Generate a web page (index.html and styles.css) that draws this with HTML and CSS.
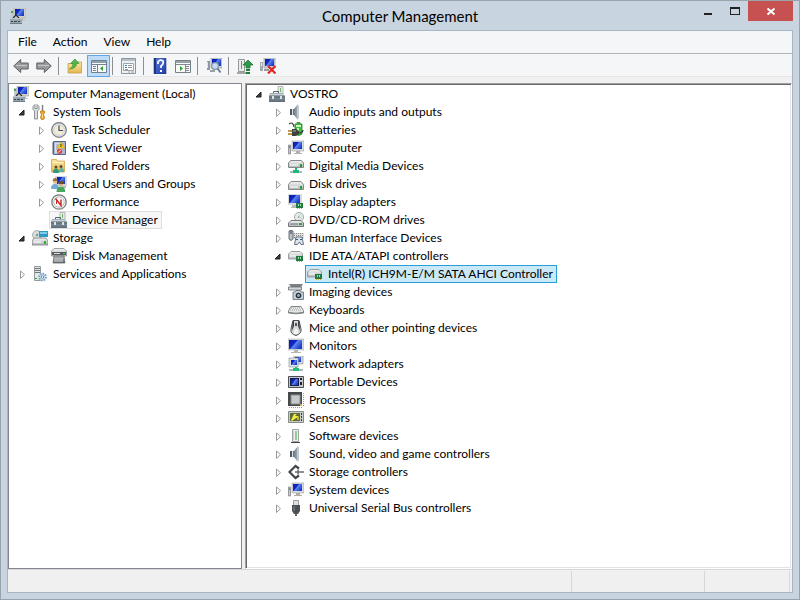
FILE: index.html
```html
<!DOCTYPE html>
<html lang="en">
<head>
<meta charset="utf-8">
<title>Computer Management</title>
<link rel="stylesheet" href="styles.css">
</head>
<body>
<svg class="sprite" aria-hidden="true">
  <defs>
    <linearGradient id="g-screen" x1="0" y1="0" x2="1" y2="0.6"><stop offset="0" stop-color="#0a1cae"/><stop offset="0.45" stop-color="#1226c4"/><stop offset="0.55" stop-color="#5f86ee"/><stop offset="1" stop-color="#1a3ccc"/></linearGradient>
    <linearGradient id="g-metal" x1="0" y1="0" x2="0" y2="1"><stop offset="0" stop-color="#f4f4f4"/><stop offset="1" stop-color="#b2b6b8"/></linearGradient>
    <linearGradient id="g-dark" x1="0" y1="0" x2="0" y2="1"><stop offset="0" stop-color="#b4b8ba"/><stop offset="1" stop-color="#5c6164"/></linearGradient>
    <linearGradient id="g-box" x1="0" y1="0" x2="0" y2="1"><stop offset="0" stop-color="#a3afb8"/><stop offset="1" stop-color="#5d6c78"/></linearGradient>
    <linearGradient id="g-folder" x1="0" y1="0" x2="0" y2="1"><stop offset="0" stop-color="#fbe7a0"/><stop offset="1" stop-color="#e3b753"/></linearGradient>
    <linearGradient id="g-horn" x1="0" y1="0" x2="1" y2="0"><stop offset="0" stop-color="#59636c"/><stop offset="1" stop-color="#a9b3ba"/></linearGradient>
    <linearGradient id="g-help" x1="0" y1="0" x2="1" y2="1"><stop offset="0" stop-color="#5b7fe0"/><stop offset="1" stop-color="#1d3ca6"/></linearGradient>
  </defs>
  <symbol id="i-closed" viewBox="0 0 9 9"><path d="M3.500 1 7.500 4.700 3.500 8.500Z" fill="#fff" stroke="#9a9a9a"/></symbol>
  <symbol id="i-open" viewBox="0 0 9 9"><path d="M7 2v5H2Z" fill="#404040" stroke="#1c1c1c"/></symbol>
  <symbol id="i-mgmt" viewBox="0 0 16 16">
    <path d="M1 2h3v9H1Z" fill="#c8ccce"/><path d="M1 3h2v2H1Z" fill="#3aa648"/>
    <path d="M4 0h12v10H4Z" fill="#d5d3c8" stroke="#a9a79b" stroke-width=".6"/><path d="M5 1h9v7H5Z" fill="url(#g-screen)"/><path d="M9 10h4v2h2v1H9Z" fill="#c3c1b4"/>
    <path d="M3 10 6 7l3 3" fill="none" stroke="#222b33" stroke-width="1.200"/><path d="M0 10h12v5H0Z" fill="#9aa8b1"/><path d="M0 10h12v1H0Z" fill="#c0cad0"/><path d="M1 13h2v1H1ZM4 13h3v1H4ZM8 13h2v1H8Z" fill="#35404a"/><path d="M0 15h12v1H0Z" fill="#6f7c85"/>
  </symbol>
  <symbol id="i-tools" viewBox="0 0 16 16">
    <path d="M3 .5v4h2v-4l2 2v3L5.500 7v8h-3V7L1 5.500v-3Z" fill="#dcdede" stroke="#777c80" stroke-width=".8"/>
    <path d="M10.500 1v7" stroke="#7d8387" stroke-width="1.500"/><path d="M8.500 7h4v2l-1 1 1 4-1 1.500H9.500l-1-1.500 1-4-1-1Z" fill="#f0a81c" stroke="#b77409" stroke-width=".7"/><path d="M10.500 10v4" stroke="#ffe08a"/>
  </symbol>
  <symbol id="i-clock" viewBox="0 0 16 16"><circle cx="8" cy="8" r="7.300" fill="#e4e9ee" stroke="#777a7c" stroke-width="1.200"/><circle cx="8" cy="8" r="5.300" fill="#f5ecd6" stroke="#c6cacd" stroke-width=".8"/><path d="M8 3.500v5h4" fill="none" stroke="#3e5266" stroke-width="1.200"/></symbol>
  <symbol id="i-event" viewBox="0 0 16 16"><path d="M2.500 1.500h12v13h-12Z" fill="#a9b7d8" stroke="#56678c"/><path d="M4 3h6v10H4Z" fill="#d8e0ee"/><path d="M5 5h4M5 7h4M5 9h3" stroke="#7c8cac" stroke-width=".8"/><path d="m10 2 4 6H6Z" fill="#f9d322" stroke="#c39a10" stroke-width=".6"/><path d="M10 4v3" stroke="#333"/><circle cx="8.500" cy="11.300" r="2.600" fill="#e14636"/><path d="m7.300 12.500 2.400-2.400" stroke="#fff"/><path d="M1 3h2M1 5h2M1 7h2M1 9h2M1 11h2M1 13h2" stroke="#565c68"/></symbol>
  <symbol id="i-shared" viewBox="0 0 16 16"><path d="M.5 3V1.500h5l1 1.500h7v11H.5Z" fill="url(#g-folder)" stroke="#d0a64a" stroke-width=".8"/><path d="M2 4h10v1H2Z" fill="#fff6cc"/><circle cx="5" cy="9" r="1.500" fill="#5e4a31"/><circle cx="10" cy="8.500" r="1.500" fill="#5e4a31"/><path d="M2 15q0-4.500 3-4.500T8 15Z" fill="#2d9a7e"/><path d="M8 14q0-4 2.500-4t2.500 4Z" fill="#62b0a0"/></symbol>
  <symbol id="i-users" viewBox="0 0 16 16"><path d="M4 0h12v10H4Z" fill="#d6d9dc"/><path d="M6 1h8v7H6Z" fill="url(#g-screen)"/><path d="M12 10h3v2h-3Z" fill="#b9bcb8"/><circle cx="4" cy="5.500" r="2.300" fill="#e3bd88"/><path d="M1.700 5q0-3 2.500-3t2.300 3Z" fill="#9a7232"/><path d="M0 13q0-5 4-5t4 5Z" fill="#77a8d4"/><circle cx="10" cy="8" r="2.300" fill="#d9b08a"/><path d="M7.500 8q0-3.300 2.600-3.300t2.400 3.300Z" fill="#6d4f2c"/><path d="M5.500 16q0-5.500 4.500-5.500t4 5.500Z" fill="#4aa55f"/></symbol>
  <symbol id="i-perf" viewBox="0 0 16 16"><circle cx="8" cy="8" r="7.200" fill="#f7f7f7" stroke="#77797a" stroke-width="1.300"/><circle cx="8" cy="8" r="5.200" fill="#fff" stroke="#a4a4a4" stroke-width=".8"/><path d="m4.500 4.500 5.500 7V5.500" fill="none" stroke="#cc2a24" stroke-width="1.500"/><path d="M5.500 6v4" stroke="#cc2a24"/></symbol>
  <symbol id="i-device" viewBox="0 0 16 16"><path d="M9 .5h5v7H9Z" fill="#e8ebe9" stroke="#a5aaa8" stroke-width=".8"/><path d="M11 2h1v4h-1Z" fill="#6cb563"/><path d="M4.500 7V5.500h5V7" fill="none" stroke="#52606b"/><path d="M1 7h13l2 3v6H0v-6Z" fill="url(#g-box)"/><path d="M1 8.500h14" stroke="#ccd4da"/><path d="M0 11h16" stroke="#4e5e6a"/><path d="M3 10h2v3H3ZM11 10h2v3h-2Z" fill="#dde2e6"/></symbol>
  <symbol id="i-storage" viewBox="0 0 16 16"><ellipse cx="5" cy="5" rx="4.500" ry="4.500" fill="#d9dddd" stroke="#999d9e" stroke-width=".8"/><circle cx="5" cy="5" r="1.300" fill="#73a787"/><path d="M7 1h9v6H7Z" fill="#2c99c6"/><path d="M8 2h7v2H8Z" fill="#7dcdea"/><path d="M2 8h12l2 3v4H0v-4Z" fill="url(#g-metal)" stroke="#777c7f" stroke-width=".8"/><path d="M12 11h2v3h-2Z" fill="#22b522"/><path d="M2 12h7" stroke="#fff"/></symbol>
  <symbol id="i-diskmgmt" viewBox="0 0 16 16"><path d="M3 .5h10L15.500 3v5H.5V3Z" fill="url(#g-metal)" stroke="#8a8e90" stroke-width=".8"/><path d="M1 4h14v3H1Z" fill="#555b5f"/><path d="M3 5.500h6" stroke="#ddd"/><path d="M12 5h2v1h-2Z" fill="#3fce46"/><path d="M3 8h10l1 7H2Z" fill="url(#g-dark)" stroke="#666b6e" stroke-width=".8"/><path d="M3 11h9M3 13h9" stroke="#d5d8da"/></symbol>
  <symbol id="i-services" viewBox="0 0 16 16"><path d="M2.500.5h6v14h-6Z" fill="#e4e8e9" stroke="#949a9c"/><path d="M3 2.500h5M3 4.500h5M3 6.500h5" stroke="#6d767b"/><path d="M3 12h2v1H3Z" fill="#2b9c2b"/><circle cx="10.500" cy="11" r="3.400" fill="#cfe0ee" stroke="#7fa5c6" stroke-width="2" stroke-dasharray="1.600 1"/><circle cx="10.500" cy="11" r="1.300" fill="#fff" stroke="#6790b2"/></symbol>
  <symbol id="i-sound" viewBox="0 0 16 16"><path d="M4 5h2l4-5v16l-4-5H4Z" fill="url(#g-horn)"/><path d="M9 1h2v14H9Z" fill="#b9cbd6"/><path d="M2 5h2v6H2Z" fill="#4d5760"/><path d="M4.500 5v6" stroke="#dde2e6"/></symbol>
  <symbol id="i-battery" viewBox="0 0 16 16"><path d="M1 2q4-3 5 3" fill="none" stroke="#3c3c34" stroke-width="1.200"/><path d="M7 2h2V.5h3V2h2v10q-3 3-7 0Z" fill="#40bd3e" stroke="#267d2b" stroke-width=".8"/><path d="M8 3h5v2H8Z" fill="#c9f3c2"/><path d="M10 6v4" stroke="#c3f6bb" stroke-width="2"/><path d="M0 9h5M0 12h5" stroke="#a07811" stroke-width="1.500"/><path d="M4 7h4l3 2v3l-3 2H4Z" fill="#42423d"/><path d="M5 9h3" stroke="#aaa"/><path d="M10 11q5 0 5-3" fill="none" stroke="#333" stroke-width="1.200"/></symbol>
  <symbol id="i-computer" viewBox="0 0 16 16"><path d="M.5 5h2v9h-2Z" fill="#c3c9ca" stroke="#85898b" stroke-width=".8"/><path d="M1 6h1v2H1Z" fill="#3b4"/><path d="M4 1h12v10H4Z" fill="#d9dcde" stroke="#a7aaac" stroke-width=".7"/><path d="M5 2h9v7H5Z" fill="url(#g-screen)"/><path d="M8 11h4v2h2v1H6v-1h2Z" fill="#b2afa5"/></symbol>
  <symbol id="i-media" viewBox="0 0 16 16"><path d="M2.500 2.500h11L15.500 5v4.500H.5V5Z" fill="url(#g-metal)" stroke="#85898b"/><path d="M2 7h8" stroke="#fff"/><path d="M12 6h2v3h-2Z" fill="#249b33"/><path d="M2 14h12" stroke="#8fa39b" stroke-width="1.500"/><path d="M7 10h2v2h2v3H5v-3h2Z" fill="#1fb878"/></symbol>
  <symbol id="i-disk" viewBox="0 0 16 16"><path d="M3 5.500h10l2.500 3v5H.5v-5Z" fill="url(#g-metal)" stroke="#85898b"/><path d="M2 11h8" stroke="#fff"/><path d="M12 10h2v3h-2Z" fill="#24a433"/></symbol>
  <symbol id="i-card" viewBox="0 0 8 8"><path d="M1 1h7v5H1Z" fill="#217a43"/><path d="M2 6h1v1H2ZM4 6h1v1H4ZM6 6h1v1H6Z" fill="#cda83a"/><path d="M3 2h1v2H3ZM5 2h1v2H5Z" fill="#9fe1a9"/></symbol>
  <symbol id="i-display" viewBox="0 0 16 16"><path d="M0 0h14v11H0Z" fill="#d7dadd"/><path d="M1 1h11v8H1Z" fill="url(#g-screen)"/><path d="M4 11h5v2h-1v1H3v-1h1Z" fill="#bbb"/><use href="#i-card" x="7" y="8" width="8" height="8"/></symbol>
  <symbol id="i-dvd" viewBox="0 0 16 16"><circle cx="11" cy="5" r="4.600" fill="#e6e8e8" stroke="#979b9d" stroke-width=".8"/><circle cx="11" cy="5" r="1.200" fill="#a3a7a9"/><path d="m11 5 2-4M11 5l4 2" stroke="#bce4cf"/><path d="M3 8.500h10l2.500 2.500v3.500H.5V11Z" fill="url(#g-metal)" stroke="#707578"/><path d="M2 12h8" stroke="#6d7275"/><path d="M11 11h3v2h-3Z" fill="#28a83b"/></symbol>
  <symbol id="i-hid" viewBox="0 0 16 16"><path d="M5 3h11v6H5Z" fill="#dfe1e2"/><path d="M6 3.500h10M6 5.500h10M6 7.500h10" stroke="#888" stroke-dasharray="1 1"/><path d="M1 1q2-1.500 4 0v8q-2 3-4 0Z" fill="#bcc3c9" stroke="#49535b" stroke-width=".8"/><path d="M3 1v3" stroke="#333f49"/><path d="M8 7h6l1.500 7.500H13L11.500 12 9.500 14.500H6.500Z" fill="#dce4eb" stroke="#58687a" stroke-width=".9"/><path d="M8 9.500h2M12 9.500h2" stroke="#3b5f83"/></symbol>
  <symbol id="i-ide" viewBox="0 0 16 16"><path d="M3 3.500h9L14.500 6v5H.5V6Z" fill="url(#g-metal)" stroke="#9a9ea0"/><path d="M2 8h6" stroke="#fff"/><use href="#i-card" x="7" y="7" width="8" height="8"/></symbol>
  <symbol id="i-imaging" viewBox="0 0 16 16"><path d="m1 0 14 0-2 3H3Z" fill="#7b8285"/><path d="M.5 3h13v3H.5Z" fill="#d5d9db" stroke="#666c70" stroke-width=".8"/><path d="M5 8h2l1-1.500h4L13 8h2.500v7.500H5Z" fill="#c7cdd2" stroke="#626b72" stroke-width=".8"/><circle cx="10.500" cy="11.500" r="2.800" fill="#27313c"/><circle cx="10.500" cy="11.500" r="1.400" fill="#8db9dc"/></symbol>
  <symbol id="i-keyboard" viewBox="0 0 16 16"><path d="M3 4.500h10l2.500 4V11q-7.500 1.500-15 0V8.500Z" fill="#e4e6e6" stroke="#777b7d" stroke-width=".9"/><path d="M3 6h10M2 8h12" stroke="#a4a8aa" stroke-dasharray="1 1"/><path d="M1 10.500q7 1.500 14 0" fill="none" stroke="#7b7f81"/></symbol>
  <symbol id="i-mouse" viewBox="0 0 16 16"><path d="M5 .5h6q1 4 2 8.500t-5 6.500Q2 14 3 9T5 .5Z" fill="#d6d8d9" stroke="#4b4f51"/><path d="M4.500 1H6v5l-2 5ZM10 1h1.500L12 11l-2-5Z" fill="#3c4042"/><path d="M7 3h2v3H7Z" fill="#51565a"/><path d="M6 11q2-5 4 0v3H6Z" fill="#f3f3f3"/></symbol>
  <symbol id="i-monitor" viewBox="0 0 16 16"><path d="M0 1h16v11H0Z" fill="#d5d9dc" stroke="#aeb2b4" stroke-width=".6"/><path d="M1 2h13v9H1Z" fill="url(#g-screen)"/><path d="M6 12h4v2h3v1H3v-1h3Z" fill="#b6b5ae"/></symbol>
  <symbol id="i-network" viewBox="0 0 16 16"><path d="M6 0h9v8H6Z" fill="#d3d8dc" stroke="#93999e" stroke-width=".7"/><path d="M7 1h6v5H7Z" fill="url(#g-screen)"/><path d="M1 2h9v9H1Z" fill="#dfe3e6" stroke="#93999e" stroke-width=".7"/><path d="M3 4h6v5H3Z" fill="url(#g-screen)"/><path d="M1 14h14" stroke="#8fa39b" stroke-width="1.500"/><path d="M7 11h2v1h2v3H5v-3h2Z" fill="#24be7c"/></symbol>
  <symbol id="i-portable" viewBox="0 0 16 16"><path d="M.5 2.500h15v11H.5Z" fill="#c3c7c9" stroke="#4c5052"/><path d="M2 4h9v8H2Z" fill="#101c4c"/><path d="M3 5h7v6H3Z" fill="url(#g-screen)"/><path d="M12 4h2v2h-2ZM12 8h2v3h-2Z" fill="#222"/></symbol>
  <symbol id="i-processor" viewBox="0 0 16 16"><path d="M15.500 1v14M1 15.500h14" stroke="#c99924" stroke-dasharray="1 1"/><path d="M0 0h14v14H0Z" fill="#45494b"/><path d="M3 3h9v9H3Z" fill="#c6caca" stroke="#8a8e90"/><path d="M12 12h2v2h-2Z" fill="#e7b442"/></symbol>
  <symbol id="i-sensor" viewBox="0 0 16 16"><path d="M.5 1.500h15v11H.5Z" fill="#c9cdca" stroke="#858b88"/><path d="M2 3h10v8H2Z" fill="#5d683b"/><path d="m3 10 3-6h3L7 6h4l-7 5Z" fill="#f2ec3c"/><path d="M9 7h2v3H9Z" fill="#b1bd38"/><path d="M13 3h1v2h-1ZM13 6h1v2h-1ZM13 9h1v2h-1Z" fill="#343a37"/></symbol>
  <symbol id="i-software" viewBox="0 0 16 16"><path d="M4.500 1.500h6v12h-6Z" fill="#edf0ee" stroke="#a0a4a2"/><path d="M8 3v9" stroke="#55b45b" stroke-width="1.200"/><path d="M5 3h1v9H5Z" fill="#cbd0cd"/><path d="M3 14.500h9" stroke="#414543"/></symbol>
  <symbol id="i-storectl" viewBox="0 0 16 16"><path d="M11 4.500 7.500 2 1.500 8l6 6 3.500-2.500" fill="none" stroke="#44484a" stroke-width="2.200"/><path d="M7 8h9M10 5.500v5" stroke="#696e71" stroke-width="1.600"/></symbol>
  <symbol id="i-usb" viewBox="0 0 16 16"><path d="M5.500.5h5V6h-5Z" fill="#dfe1e2" stroke="#85898b" stroke-width=".8"/><path d="M4 5h8v6l-2 3H6l-2-3Z" fill="#4c5053"/><path d="M6 6v5" stroke="#878c8f"/><path d="M8 13v3" stroke="#5e6366" stroke-width="2"/></symbol>
  <symbol id="i-back" viewBox="0 0 16 16"><path d="m.7 8 7-6.500V5h7.500v6H7.700v3.500Z" fill="#979b9e" stroke="#5e6265"/><path d="M3 7.500h11" stroke="#c4c8ca"/></symbol>
  <symbol id="i-fwd" viewBox="0 0 16 16"><path d="m15.300 8-7-6.500V5H.8v6h7.500v3.500Z" fill="#979b9e" stroke="#5e6265"/><path d="M2 7.500h11" stroke="#c4c8ca"/></symbol>
  <symbol id="i-up" viewBox="0 0 16 16"><path d="M1 5.500h6L8 4h6.500v11H1Z" fill="url(#g-folder)" stroke="#c9a04a" stroke-width=".8"/><path d="M2.500 11Q6 10 6 5.500H3.500L8 1l4 4.500H9.500q0 5-7 5.500Z" fill="#4fb94a" stroke="#2d8a33" stroke-width=".6"/></symbol>
  <symbol id="i-treepane" viewBox="0 0 16 16"><path d="M.5 2.500h15v12H.5Z" fill="#f7f9fb" stroke="#71808e"/><path d="M1 3h14v2H1Z" fill="#91a0ad"/><path d="M1 6.500h14" stroke="#74818e"/><path d="M6.500 7v7" stroke="#74818e"/><path d="M2 8.500h3M2 10.500h3M2 12.500h3" stroke="#7b8894"/><path d="M12 8v5L9 10.500Z" fill="#2d9e2f"/></symbol>
  <symbol id="i-props" viewBox="0 0 16 16"><path d="M.5.500h14v15H.5Z" fill="#eef0f2" stroke="#8c969e"/><path d="M1 2h13" stroke="#b8c0c5" stroke-width="2"/><path d="M2.500 5.500h10v7h-10Z" fill="#fff" stroke="#9aa7b0"/><path d="M4 7.500h2M4 9.500h2" stroke="#357cbe"/><path d="M7 7.500h4M7 9.500h4M4 11.500h3" stroke="#889299"/><path d="M7 14h2M10 14h3" stroke="#9aa3a9"/></symbol>
  <symbol id="i-help" viewBox="0 0 16 16"><path d="M2 0h12v16H2Z" fill="url(#g-help)" stroke="#223a85" stroke-width=".6"/><path d="M3 0v16" stroke="#1d357e" stroke-width="2"/><path d="M6 6V4q2-3 5-1 1 3-2 5v2" fill="none" stroke="#fff" stroke-width="1.700"/><path d="M8 12h2v2H8Z" fill="#fff"/></symbol>
  <symbol id="i-actionpane" viewBox="0 0 16 16"><path d="M.5 2.500h15v12H.5Z" fill="#f7f9fb" stroke="#778087"/><path d="M1 3h14v2H1Z" fill="#98a1a8"/><path d="M1 6.500h14M10.500 7v7" stroke="#81898f"/><path d="M11 8.500h3M11 10.500h3M11 12.500h3" stroke="#7f898f"/><path d="m5 8 3 2.500L5 13Z" fill="#2d9e2f"/></symbol>
  <symbol id="i-scan" viewBox="0 0 16 16"><path d="M1 3h3v9H1Z" fill="#8f999f"/><path d="M1 4h1v6H1Z" fill="#e1e5e7"/><path d="M5 0h11v10H5Z" fill="#d1d5d8" stroke="#999ea1" stroke-width=".7"/><path d="M6 1h9v7H6Z" fill="url(#g-screen)"/><path d="M4 12h5v2H4Z" fill="#9ba0a2"/><circle cx="9" cy="8" r="3.400" fill="#c7dbf0" stroke="#7f93a8" stroke-width="1.200"/><path d="m11.500 10.500 3 4" stroke="#697a89" stroke-width="1.800"/></symbol>
  <symbol id="i-update" viewBox="0 0 16 16"><path d="M1.500 1.500h6v12h-6Z" fill="#e9eeea" stroke="#929894"/><path d="M4.500 3v8" stroke="#48a650"/><path d="M0 15h9" stroke="#555"/><path d="m11 2 5 5h-3v3H9V7H6Z" fill="#299c46" stroke="#12682b" stroke-width=".7"/><path d="M9 12h4M9 15h4" stroke="#217c3a" stroke-width="2"/></symbol>
  <symbol id="i-uninstall" viewBox="0 0 16 16"><path d="M0 4h3v9H0Z" fill="#a3aaae"/><path d="M1 5h1v3H1Z" fill="#eee"/><path d="M4 0h11v10H4Z" fill="#d1d5d8" stroke="#999ea1" stroke-width=".7"/><path d="M5 1h9v7H5Z" fill="url(#g-screen)"/><path d="M4 11h5v2H4Z" fill="#999"/><path d="m8 8 7.500 7.500m0-7.500L8 15.500" stroke="#df2824" stroke-width="2.200"/></symbol>
</svg>

<div class="window">
  <header class="titlebar">
    <svg class="icon"><use href="#i-mgmt"/></svg>
    <h1 class="title">Computer Management</h1>
    <div class="controls">
      <button class="control" type="button" aria-label="Minimize"><svg class="glyph" viewBox="0 0 10 10"><path d="M1 7h8v2H1Z" fill="#222"/></svg></button>
      <button class="control" type="button" aria-label="Maximize"><svg class="glyph" viewBox="0 0 10 10"><path d="M0 1h10v8H0ZM1 3v5h8V3Z" fill="#222" fill-rule="evenodd"/></svg></button>
      <button class="control control-close" type="button" aria-label="Close"><svg class="glyph" viewBox="0 0 10 10"><path d="m1.500 2.500 7 6m0-6-7 6" stroke="#fff" stroke-width="2"/></svg></button>
    </div>
  </header>

  <div class="client">
    <nav class="menu" aria-label="Menu">
      <button class="menu-item" type="button">File</button>
      <button class="menu-item" type="button">Action</button>
      <button class="menu-item" type="button">View</button>
      <button class="menu-item" type="button">Help</button>
    </nav>

    <div class="toolbar" role="toolbar" aria-label="Tools">
      <button class="tool" type="button" aria-label="Back"><svg class="icon"><use href="#i-back"/></svg></button>
      <button class="tool" type="button" aria-label="Forward"><svg class="icon"><use href="#i-fwd"/></svg></button>
      <span class="separator"></span>
      <button class="tool" type="button" aria-label="Up one level"><svg class="icon"><use href="#i-up"/></svg></button>
      <button class="tool tool-pressed" type="button" aria-pressed="true" aria-label="Console tree"><svg class="icon"><use href="#i-treepane"/></svg></button>
      <span class="separator"></span>
      <button class="tool" type="button" aria-label="Properties"><svg class="icon"><use href="#i-props"/></svg></button>
      <span class="separator"></span>
      <button class="tool" type="button" aria-label="Help topics"><svg class="icon"><use href="#i-help"/></svg></button>
      <button class="tool" type="button" aria-label="Action pane"><svg class="icon"><use href="#i-actionpane"/></svg></button>
      <span class="separator"></span>
      <button class="tool" type="button" aria-label="Scan for hardware changes"><svg class="icon"><use href="#i-scan"/></svg></button>
      <span class="separator"></span>
      <button class="tool" type="button" aria-label="Update driver"><svg class="icon"><use href="#i-update"/></svg></button>
      <button class="tool" type="button" aria-label="Uninstall"><svg class="icon"><use href="#i-uninstall"/></svg></button>
    </div>

    <main class="panes">
      <section class="pane pane-console" aria-label="Console tree">
        <ul class="tree">
          <li>
            <div class="row"><span class="item"><svg class="icon"><use href="#i-mgmt"/></svg>Computer Management (Local)</span></div>
            <ul class="branch branch-root">
              <li>
                <div class="row"><button class="twisty" type="button" aria-label="Collapse"><svg class="arrow"><use href="#i-open"/></svg></button><span class="item"><svg class="icon"><use href="#i-tools"/></svg>System Tools</span></div>
                <ul class="branch">
                  <li class="row"><button class="twisty" type="button" aria-label="Expand"><svg class="arrow"><use href="#i-closed"/></svg></button><span class="item"><svg class="icon"><use href="#i-clock"/></svg>Task Scheduler</span></li>
                  <li class="row"><button class="twisty" type="button" aria-label="Expand"><svg class="arrow"><use href="#i-closed"/></svg></button><span class="item"><svg class="icon"><use href="#i-event"/></svg>Event Viewer</span></li>
                  <li class="row"><button class="twisty" type="button" aria-label="Expand"><svg class="arrow"><use href="#i-closed"/></svg></button><span class="item"><svg class="icon"><use href="#i-shared"/></svg>Shared Folders</span></li>
                  <li class="row"><button class="twisty" type="button" aria-label="Expand"><svg class="arrow"><use href="#i-closed"/></svg></button><span class="item"><svg class="icon"><use href="#i-users"/></svg>Local Users and Groups</span></li>
                  <li class="row"><button class="twisty" type="button" aria-label="Expand"><svg class="arrow"><use href="#i-closed"/></svg></button><span class="item"><svg class="icon"><use href="#i-perf"/></svg>Performance</span></li>
                  <li class="row"><span class="twisty"></span><span class="item item-current"><svg class="icon"><use href="#i-device"/></svg>Device Manager</span></li>
                </ul>
              </li>
              <li>
                <div class="row"><button class="twisty" type="button" aria-label="Collapse"><svg class="arrow"><use href="#i-open"/></svg></button><span class="item"><svg class="icon"><use href="#i-storage"/></svg>Storage</span></div>
                <ul class="branch">
                  <li class="row"><span class="twisty"></span><span class="item"><svg class="icon"><use href="#i-diskmgmt"/></svg>Disk Management</span></li>
                </ul>
              </li>
              <li class="row"><button class="twisty" type="button" aria-label="Expand"><svg class="arrow"><use href="#i-closed"/></svg></button><span class="item"><svg class="icon"><use href="#i-services"/></svg>Services and Applications</span></li>
            </ul>
          </li>
        </ul>
      </section>

      <section class="pane pane-devices" aria-label="Devices">
        <ul class="tree">
          <li>
            <div class="row"><button class="twisty" type="button" aria-label="Collapse"><svg class="arrow"><use href="#i-open"/></svg></button><span class="item"><svg class="icon"><use href="#i-device"/></svg>VOSTRO</span></div>
            <ul class="branch">
              <li class="row"><button class="twisty" type="button" aria-label="Expand"><svg class="arrow"><use href="#i-closed"/></svg></button><span class="item"><svg class="icon"><use href="#i-sound"/></svg>Audio inputs and outputs</span></li>
              <li class="row"><button class="twisty" type="button" aria-label="Expand"><svg class="arrow"><use href="#i-closed"/></svg></button><span class="item"><svg class="icon"><use href="#i-battery"/></svg>Batteries</span></li>
              <li class="row"><button class="twisty" type="button" aria-label="Expand"><svg class="arrow"><use href="#i-closed"/></svg></button><span class="item"><svg class="icon"><use href="#i-computer"/></svg>Computer</span></li>
              <li class="row"><button class="twisty" type="button" aria-label="Expand"><svg class="arrow"><use href="#i-closed"/></svg></button><span class="item"><svg class="icon"><use href="#i-media"/></svg>Digital Media Devices</span></li>
              <li class="row"><button class="twisty" type="button" aria-label="Expand"><svg class="arrow"><use href="#i-closed"/></svg></button><span class="item"><svg class="icon"><use href="#i-disk"/></svg>Disk drives</span></li>
              <li class="row"><button class="twisty" type="button" aria-label="Expand"><svg class="arrow"><use href="#i-closed"/></svg></button><span class="item"><svg class="icon"><use href="#i-display"/></svg>Display adapters</span></li>
              <li class="row"><button class="twisty" type="button" aria-label="Expand"><svg class="arrow"><use href="#i-closed"/></svg></button><span class="item"><svg class="icon"><use href="#i-dvd"/></svg>DVD/CD-ROM drives</span></li>
              <li class="row"><button class="twisty" type="button" aria-label="Expand"><svg class="arrow"><use href="#i-closed"/></svg></button><span class="item"><svg class="icon"><use href="#i-hid"/></svg>Human Interface Devices</span></li>
              <li>
                <div class="row"><button class="twisty" type="button" aria-label="Collapse"><svg class="arrow"><use href="#i-open"/></svg></button><span class="item"><svg class="icon"><use href="#i-ide"/></svg>IDE ATA/ATAPI controllers</span></div>
                <ul class="branch">
                  <li class="row"><span class="twisty"></span><span class="item item-selected"><svg class="icon"><use href="#i-ide"/></svg>Intel(R) ICH9M-E/M SATA AHCI Controller</span></li>
                </ul>
              </li>
              <li class="row"><button class="twisty" type="button" aria-label="Expand"><svg class="arrow"><use href="#i-closed"/></svg></button><span class="item"><svg class="icon"><use href="#i-imaging"/></svg>Imaging devices</span></li>
              <li class="row"><button class="twisty" type="button" aria-label="Expand"><svg class="arrow"><use href="#i-closed"/></svg></button><span class="item"><svg class="icon"><use href="#i-keyboard"/></svg>Keyboards</span></li>
              <li class="row"><button class="twisty" type="button" aria-label="Expand"><svg class="arrow"><use href="#i-closed"/></svg></button><span class="item"><svg class="icon"><use href="#i-mouse"/></svg>Mice and other pointing devices</span></li>
              <li class="row"><button class="twisty" type="button" aria-label="Expand"><svg class="arrow"><use href="#i-closed"/></svg></button><span class="item"><svg class="icon"><use href="#i-monitor"/></svg>Monitors</span></li>
              <li class="row"><button class="twisty" type="button" aria-label="Expand"><svg class="arrow"><use href="#i-closed"/></svg></button><span class="item"><svg class="icon"><use href="#i-network"/></svg>Network adapters</span></li>
              <li class="row"><button class="twisty" type="button" aria-label="Expand"><svg class="arrow"><use href="#i-closed"/></svg></button><span class="item"><svg class="icon"><use href="#i-portable"/></svg>Portable Devices</span></li>
              <li class="row"><button class="twisty" type="button" aria-label="Expand"><svg class="arrow"><use href="#i-closed"/></svg></button><span class="item"><svg class="icon"><use href="#i-processor"/></svg>Processors</span></li>
              <li class="row"><button class="twisty" type="button" aria-label="Expand"><svg class="arrow"><use href="#i-closed"/></svg></button><span class="item"><svg class="icon"><use href="#i-sensor"/></svg>Sensors</span></li>
              <li class="row"><button class="twisty" type="button" aria-label="Expand"><svg class="arrow"><use href="#i-closed"/></svg></button><span class="item"><svg class="icon"><use href="#i-software"/></svg>Software devices</span></li>
              <li class="row"><button class="twisty" type="button" aria-label="Expand"><svg class="arrow"><use href="#i-closed"/></svg></button><span class="item"><svg class="icon"><use href="#i-sound"/></svg>Sound, video and game controllers</span></li>
              <li class="row"><button class="twisty" type="button" aria-label="Expand"><svg class="arrow"><use href="#i-closed"/></svg></button><span class="item"><svg class="icon"><use href="#i-storectl"/></svg>Storage controllers</span></li>
              <li class="row"><button class="twisty" type="button" aria-label="Expand"><svg class="arrow"><use href="#i-closed"/></svg></button><span class="item"><svg class="icon"><use href="#i-computer"/></svg>System devices</span></li>
              <li class="row"><button class="twisty" type="button" aria-label="Expand"><svg class="arrow"><use href="#i-closed"/></svg></button><span class="item"><svg class="icon"><use href="#i-usb"/></svg>Universal Serial Bus controllers</span></li>
            </ul>
          </li>
        </ul>
      </section>
    </main>

    <footer class="statusbar">
      <div class="status status-main"></div>
      <div class="status status-wide"></div>
      <div class="status status-narrow"></div>
    </footer>
  </div>
</div>
</body>
</html>
```

FILE: styles.css
```css
* {
  box-sizing: border-box;
}

body {
  margin: 0;
  font: 12px/16px "Segoe UI", Lato, "Open Sans", sans-serif;
  color: #000;
}

button {
  margin: 0;
  padding: 0;
  border: 0;
  background: none;
  font: inherit;
  color: inherit;
}

ul {
  margin: 0;
  padding: 0;
  list-style: none;
}

.sprite {
  position: absolute;
  width: 0;
  height: 0;
}

.icon {
  flex: none;
  display: block;
  width: 16px;
  height: 16px;
}

.window {
  display: flex;
  flex-direction: column;
  min-height: 100vh;
  padding: 0 6px 6px;
  border: 1px solid #98a3ac;
  background: #c8d5e0;
}

/* Title bar */
.titlebar {
  display: grid;
  grid-template-columns: 1fr auto 1fr;
  align-items: center;
  height: 29px;
}

.titlebar > .icon {
  margin-left: 3px;
}

.title {
  margin: 0;
  font-size: 15px;
  font-weight: 400;
  line-height: 20px;
}

.controls {
  display: flex;
  align-self: start;
  justify-content: flex-end;
}

.control {
  display: flex;
  align-items: center;
  justify-content: center;
  width: 27px;
  height: 20px;
}

.control-close {
  width: 45px;
  background: #c75050;
}

.glyph {
  width: 10px;
  height: 10px;
}

/* Client area */
.client {
  flex: 1;
  display: flex;
  flex-direction: column;
  border: 1px solid #a7b6c2;
  background: #f0f0f0;
}

.menu {
  display: flex;
  height: 23px;
  padding-left: 2px;
  border-bottom: 1px solid #b0b4b8;
  background: #f5f6f7;
}

.menu-item {
  padding: 0 8px;
}

.toolbar {
  display: flex;
  align-items: flex-end;
  height: 23px;
  padding-left: 2px;
  border-bottom: 1px solid #e6e6e6;
  background: #f5f6f7;
}

.tool {
  display: flex;
  align-items: center;
  width: 23px;
  height: 22px;
  margin-bottom: -1px;
  padding-left: 3px;
}

.tool-pressed {
  border: 1px solid #64a5e7;
  background: #bcdcf7;
}

.separator {
  width: 1px;
  height: 18px;
  margin: 0 5px 1px 2px;
  background: #8d9092;
}

/* Panes */
.panes {
  flex: 1;
  display: flex;
  gap: 3px;
  padding-top: 6px;
}

.pane {
  background: #fff;
}

.pane-console {
  flex: 0 0 234px;
  padding: 1px 2px;
  border: 1px solid #828790;
}

.pane-devices {
  flex: 1;
  padding: 1px 1px 1px 4px;
  border: 1px solid;
  border-color: #a0a0a0 #fff #fff #a0a0a0;
  box-shadow: inset 1px 1px #696969, inset -1px -1px #e3e3e3;
}

.branch {
  padding-left: 19px;
}

.branch-root {
  padding-left: 2px;
}

.row {
  display: flex;
  height: 18px;
}

.twisty {
  display: flex;
  align-items: center;
  justify-content: center;
  width: 17px;
  padding-top: 1px;
}

.arrow {
  width: 9px;
  height: 9px;
}

.item {
  display: flex;
  align-items: center;
  gap: 5px;
  padding: 0 3px 0 1px;
  border: 1px solid transparent;
  white-space: nowrap;
}

.item-current {
  border-color: #dedede;
  background: #f7f7f7;
}

.item-selected {
  border-color: #26a0da;
  background: #cbe8f6;
}

/* Status bar */
.statusbar {
  display: flex;
  height: 23px;
  padding: 1px 2px 0 0;
  border-top: 1px solid #d7d7d7;
}

.status {
  border-right: 1px solid #d7d7d7;
}

.status-main {
  flex: 1;
}

.status-wide {
  width: 133px;
}

.status-narrow {
  width: 85px;
}
```
